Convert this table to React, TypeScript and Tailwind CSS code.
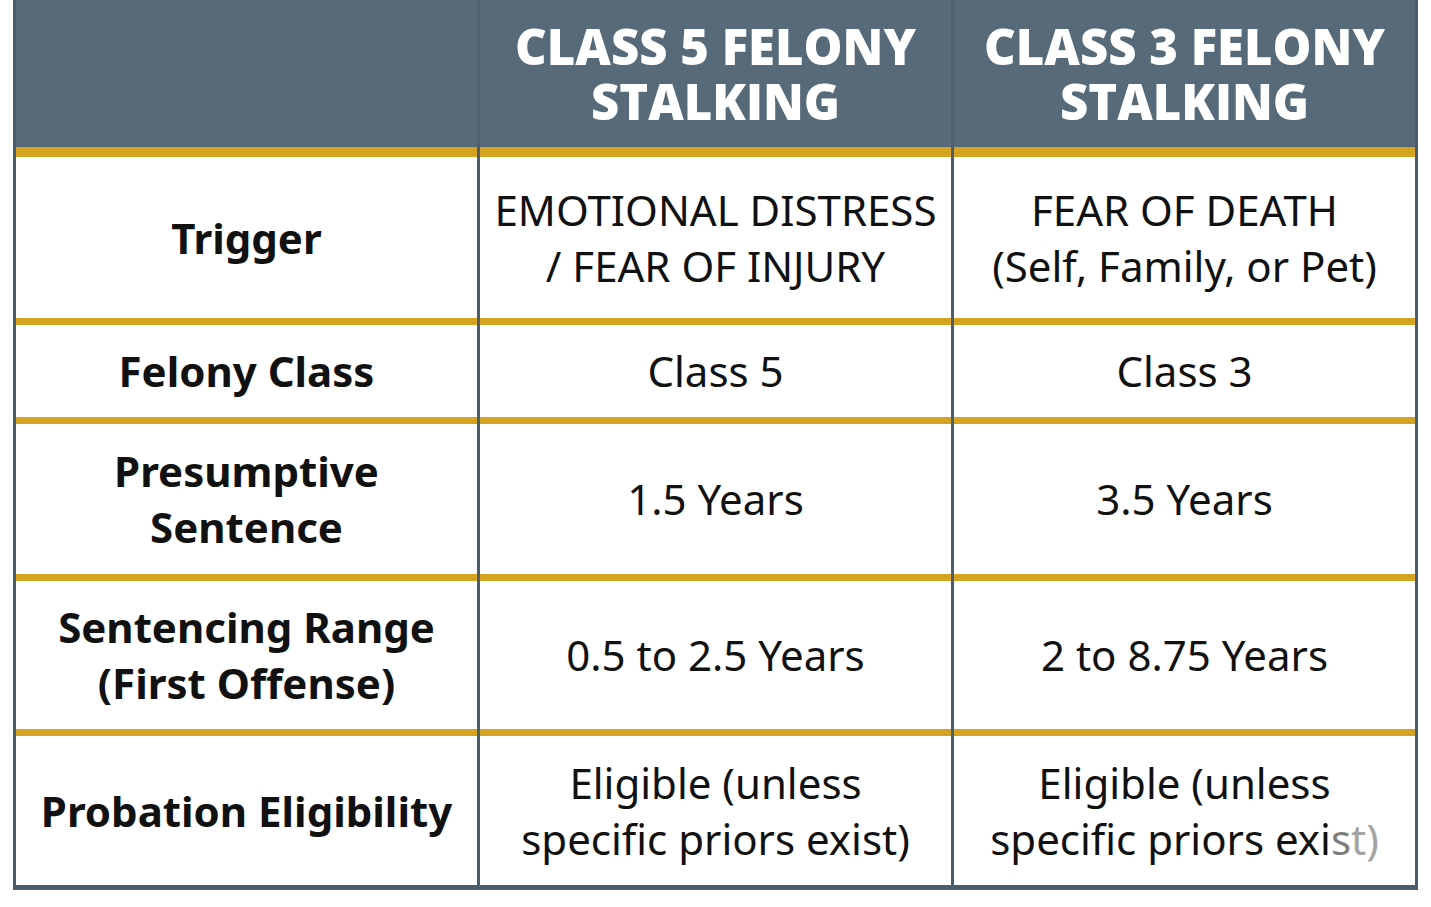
import React from "react";

const Divider = () => <div className="w-[3px] shrink-0 bg-[#4b5c6a]" />;

function GoldBar({ h }: { h: string }) {
  return (
    <div className={`flex ${h}`}>
      <div className="w-[461px] bg-[#d4a31f]" />
      <Divider />
      <div className="w-[471px] bg-[#d4a31f]" />
      <Divider />
      <div className="w-[461px] bg-[#d4a31f]" />
    </div>
  );
}

function Row({
  h,
  label,
  a,
  b,
}: {
  h: string;
  label: React.ReactNode;
  a: React.ReactNode;
  b: React.ReactNode;
}) {
  return (
    <div className={`flex ${h} bg-white`}>
      <div className="flex w-[461px] items-center justify-center text-center font-bold text-[42px] leading-[56px] text-[#111]">
        {label}
      </div>
      <Divider />
      <div className="flex w-[471px] items-center justify-center text-center text-[42px] leading-[56px] text-[#111]">
        {a}
      </div>
      <Divider />
      <div className="flex w-[461px] items-center justify-center text-center text-[42px] leading-[56px] text-[#111]">
        {b}
      </div>
    </div>
  );
}

function HeaderCell({ w, l1 }: { w: string; l1: string }) {
  return (
    <div
      className={`flex ${w} flex-col items-center justify-center text-center font-extrabold text-[49px] leading-[55px] text-white [font-family:'Open_Sans',sans-serif]`}
    >
      <div>{l1}</div>
      <div>STALKING</div>
    </div>
  );
}

export default function App() {
  return (
    <div className="min-h-[907px] w-[1431px] bg-white pl-[13px] [font-family:'Noto_Sans',sans-serif]">
      <div className="w-[1405px] border-x-[3px] border-b-[5px] border-[#4b5c6a]">
        <div className="flex h-[147px] bg-[#566a79]">
          <div className="w-[461px]" />
          <div className="w-[3px] shrink-0 bg-[#4e6170]" />
          <HeaderCell w="w-[471px]" l1="CLASS 5 FELONY" />
          <div className="w-[3px] shrink-0 bg-[#4e6170]" />
          <HeaderCell w="w-[461px]" l1="CLASS 3 FELONY" />
        </div>
        <GoldBar h="h-[10px]" />
        <Row
          h="h-[161px]"
          label="Trigger"
          a={
            <div>
              EMOTIONAL DISTRESS
              <br />/ FEAR OF INJURY
            </div>
          }
          b={
            <div>
              FEAR OF DEATH
              <br />
              (Self, Family, or Pet)
            </div>
          }
        />
        <GoldBar h="h-[7px]" />
        <Row h="h-[92px]" label="Felony Class" a="Class 5" b="Class 3" />
        <GoldBar h="h-[7px]" />
        <Row
          h="h-[150px]"
          label={
            <div>
              Presumptive
              <br />
              Sentence
            </div>
          }
          a="1.5 Years"
          b="3.5 Years"
        />
        <GoldBar h="h-[7px]" />
        <Row
          h="h-[148px]"
          label={
            <div>
              Sentencing Range
              <br />
              (First Offense)
            </div>
          }
          a="0.5 to 2.5 Years"
          b="2 to 8.75 Years"
        />
        <GoldBar h="h-[7px]" />
        <Row
          h="h-[149px]"
          label="Probation Eligibility"
          a={
            <div>
              Eligible (unless
              <br />
              specific priors exist)
            </div>
          }
          b={
            <div>
              Eligible (unless
              <br />
              specific priors exi
              <span className="text-[#7d7d7d]">s</span>
              <span className="text-[#a3a3a3]">t)</span>
            </div>
          }
        />
      </div>
    </div>
  );
}
